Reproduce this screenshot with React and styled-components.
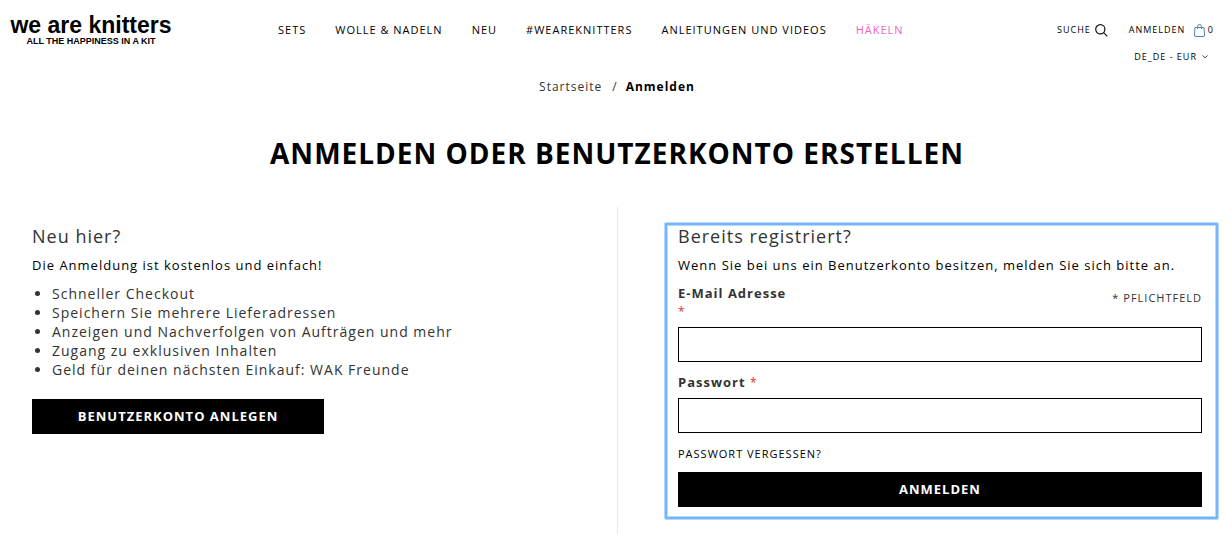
import React from "react";
import styled, { createGlobalStyle } from "styled-components";

const GlobalStyle = createGlobalStyle`
  * { box-sizing: border-box; }
  body {
    margin: 0;
    background: #fff;
    color: #333;
    font-family: "Open Sans", "Noto Sans", sans-serif;
    font-size: 13px;
    line-height: 18px;
    letter-spacing: 1px;
  }
  a { color: inherit; text-decoration: none; }
  h1, h2, p, ul { margin: 0; }
`;

const Header = styled.header`
  display: flex;
  align-items: flex-start;
  padding: 16px 17px 0 11px;
`;

const Logo = styled.a`
  flex: none;
  display: flex;
  flex-direction: column;
  align-items: center;
  width: 160px;
  color: #000;
  font-family: "Liberation Sans", Arial, sans-serif;
  font-weight: 700;
  letter-spacing: 0;
  white-space: nowrap;
`;

const LogoName = styled.span`
  font-size: 23px;
  line-height: 19px;
`;

const LogoClaim = styled.span`
  font-size: 9px;
  line-height: 12px;
`;

const Nav = styled.nav`
  display: flex;
  gap: 29px;
  margin-left: 107px;
  padding-top: 5px;
`;

const NavLink = styled.a`
  color: ${({ $accent }) => ($accent ? "#f25fc6" : "#000")};
  font-size: 11px;
  white-space: nowrap;
`;

const Tools = styled.div`
  margin-left: auto;
  display: flex;
  flex-direction: column;
  align-items: flex-end;
  gap: 9px;
  padding-top: 5px;
`;

const ToolRow = styled.div`
  display: flex;
  gap: 21px;
`;

const ToolButton = styled.button`
  display: flex;
  align-items: center;
  gap: 4px;
  padding: 0;
  border: 0;
  background: none;
  color: #000;
  font: inherit;
  font-size: 9px;
  letter-spacing: 1px;
`;

const ToolLink = styled.a`
  display: flex;
  align-items: center;
  color: #000;
  font-size: 9px;
`;

const Account = styled.div`
  display: flex;
  gap: 9px;
`;

const LocaleButton = styled(ToolButton)`
  gap: 5px;
  margin-right: 6px;
`;

const Page = styled.main`
  padding-left: 3px;
`;

const Breadcrumb = styled.nav`
  display: flex;
  justify-content: center;
  gap: 8px;
  margin-top: 12px;
  font-size: 12px;
`;

const Current = styled.strong`
  color: #000;
`;

const Separator = styled.span`
  margin-left: 2px;
`;

const Title = styled.h1`
  margin-top: 37px;
  color: #000;
  font-size: 28px;
  line-height: 40px;
  text-align: center;
`;

const Columns = styled.div`
  display: grid;
  grid-template-columns: 1fr 1fr;
  margin-top: 34px;
`;

const NewCustomer = styled.section`
  padding: 18px 29px 0;
`;

const Registered = styled.section`
  padding: 16px 13px 15px 47px;
  border-left: 1px solid #e8e8e8;
`;

const LoginForm = styled.form`
  padding: 0 14px 10px 11px;
  border: 2px solid #73b6fa;
  border-radius: 1px;
  box-shadow: 0 0 0 1px #b5d8fc, inset 0 0 0 1px #b5d8fc;
`;

const Heading = styled.h2`
  font-size: 18px;
  font-weight: 400;
  line-height: 22px;
`;

const Intro = styled.p`
  margin: 9px 0 10px;
  color: #000;
`;

const Benefits = styled.ul`
  padding-left: 20px;
  font-size: 14px;
  line-height: 19px;
`;

const Submit = styled.button`
  display: block;
  width: ${({ $wide }) => ($wide ? "100%" : "292px")};
  height: 35px;
  margin-top: ${({ $wide }) => ($wide ? "9px" : "20px")};
  padding: 0 0 2px;
  border: 0;
  background: #000;
  color: #fff;
  font: inherit;
  font-size: 13px;
  font-weight: 700;
  letter-spacing: 1px;
`;

const LabelRow = styled.div`
  display: flex;
  justify-content: space-between;
`;

const Label = styled.label`
  display: block;
  max-width: 120px;
  font-weight: 700;
`;

const Required = styled.span`
  color: #e02b27;
  font-size: 12px;
  font-weight: 400;
  line-height: 1;
`;

const RequiredNote = styled.span`
  padding-top: 5px;
  font-size: 11px;
`;

const Field = styled.input`
  display: block;
  width: 100%;
  height: 35px;
  margin: 7px 0 11px;
  padding: 0 10px;
  border: 1px solid #000;
  border-radius: 0;
  background: #fff;
  font: inherit;
`;

const Forgot = styled.a`
  display: block;
  margin-top: 12px;
  color: #000;
  font-size: 11px;
`;

const navItems = ["Sets", "Wolle & Nadeln", "Neu", "#weareknitters", "Anleitungen und Videos"];

const benefits = [
  "Schneller Checkout",
  "Speichern Sie mehrere Lieferadressen",
  "Anzeigen und Nachverfolgen von Aufträgen und mehr",
  "Zugang zu exklusiven Inhalten",
  "Geld für deinen nächsten Einkauf: WAK Freunde",
];

const SearchIcon = () => (
  <svg width="13" height="13" viewBox="0 0 13 13" fill="none" stroke="#111" strokeWidth="1.2" aria-hidden="true">
    <circle cx="5.3" cy="5.3" r="4.6" />
    <path d="M8.6 8.6 12.3 12.3" />
  </svg>
);

const BagIcon = () => (
  <svg width="11" height="13" viewBox="0 0 11 13" fill="none" stroke="#4a86a8" strokeWidth="1" aria-hidden="true">
    <path d="M1 3.5h9l.5 7.5q0 1.5-1.5 1.5H2Q.5 12.5.5 11z" />
    <path d="M3.5 5V2.5Q3.5.5 5.5.5t2 2V5" />
  </svg>
);

const ChevronIcon = () => (
  <svg width="6" height="4" viewBox="0 0 6 4" fill="none" stroke="#444" aria-hidden="true">
    <path d="M.5.5 3 2.8 5.5.5" />
  </svg>
);

export default function App() {
  return (
    <>
      <GlobalStyle />
      <Header>
        <Logo href="#">
          <LogoName>we are knitters</LogoName>
          <LogoClaim>ALL THE HAPPINESS IN A KIT</LogoClaim>
        </Logo>
        <Nav>
          {navItems.map((item) => (
            <NavLink key={item} href="#">{item.toUpperCase()}</NavLink>
          ))}
          <NavLink href="#" $accent>HÄKELN</NavLink>
        </Nav>
        <Tools>
          <ToolRow>
            <ToolButton type="button">SUCHE <SearchIcon /></ToolButton>
            <Account>
              <ToolLink href="#">ANMELDEN</ToolLink>
              <ToolLink href="#" aria-label="Warenkorb"><BagIcon />&thinsp;0</ToolLink>
            </Account>
          </ToolRow>
          <LocaleButton type="button">DE_DE - EUR <ChevronIcon /></LocaleButton>
        </Tools>
      </Header>
      <Page>
        <Breadcrumb>
          <a href="#">Startseite</a>
          <Separator>/</Separator>
          <Current>Anmelden</Current>
        </Breadcrumb>
        <Title>ANMELDEN ODER BENUTZERKONTO ERSTELLEN</Title>
        <Columns>
          <NewCustomer>
            <Heading>Neu hier?</Heading>
            <Intro>Die Anmeldung ist kostenlos und einfach!</Intro>
            <Benefits>
              {benefits.map((text) => <li key={text}>{text}</li>)}
            </Benefits>
            <Submit type="button">BENUTZERKONTO ANLEGEN</Submit>
          </NewCustomer>
          <Registered>
            <LoginForm onSubmit={(e) => e.preventDefault()}>
              <Heading>Bereits registriert?</Heading>
              <Intro>Wenn Sie bei uns ein Benutzerkonto besitzen, melden Sie sich bitte an.</Intro>
              <LabelRow>
                <Label htmlFor="email">E-Mail Adresse <Required>*</Required></Label>
                <RequiredNote>* PFLICHTFELD</RequiredNote>
              </LabelRow>
              <Field id="email" type="email" />
              <LabelRow>
                <Label htmlFor="password">Passwort <Required>*</Required></Label>
              </LabelRow>
              <Field id="password" type="password" />
              <Forgot href="#">PASSWORT VERGESSEN?</Forgot>
              <Submit type="submit" $wide>ANMELDEN</Submit>
            </LoginForm>
          </Registered>
        </Columns>
      </Page>
    </>
  );
}
